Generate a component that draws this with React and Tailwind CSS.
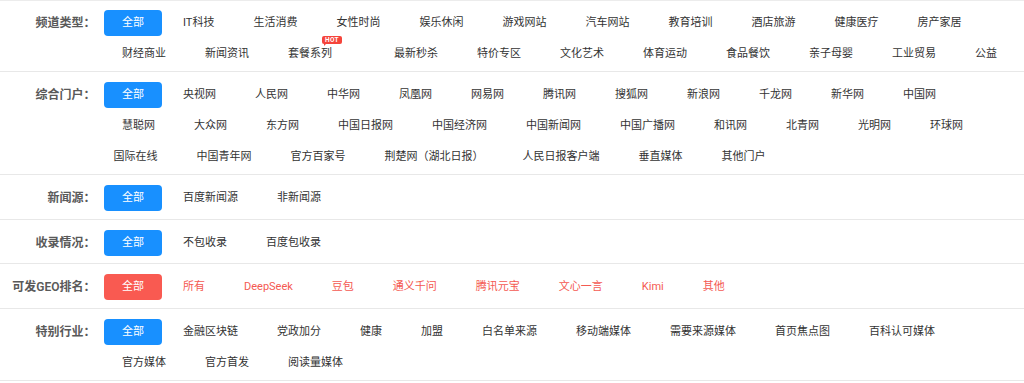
const groups = [
  {
    label: '频道类型：',
    multi: true,
    items: ['全部', 'IT科技', '生活消费', '女性时尚', '娱乐休闲', '游戏网站', '汽车网站', '教育培训', '酒店旅游', '健康医疗', '房产家居', '财经商业', '新闻资讯', '套餐系列', '最新秒杀', '特价专区', '文化艺术', '体育运动', '食品餐饮', '亲子母婴', '工业贸易', '公益'],
  },
  {
    label: '综合门户：',
    multi: true,
    items: ['全部', '央视网', '人民网', '中华网', '凤凰网', '网易网', '腾讯网', '搜狐网', '新浪网', '千龙网', '新华网', '中国网', '慧聪网', '大众网', '东方网', '中国日报网', '中国经济网', '中国新闻网', '中国广播网', '和讯网', '北青网', '光明网', '环球网', '国际在线', '中国青年网', '官方百家号', '荆楚网（湖北日报）', '人民日报客户端', '垂直媒体', '其他门户'],
  },
  { label: '新闻源：', items: ['全部', '百度新闻源', '非新闻源'] },
  { label: '收录情况：', items: ['全部', '不包收录', '百度包收录'] },
  { label: '可发GEO排名：', red: true, items: ['全部', '所有', 'DeepSeek', '豆包', '通义千问', '腾讯元宝', '文心一言', 'Kimi', '其他'] },
  {
    label: '特别行业：',
    multi: true,
    items: ['全部', '金融区块链', '党政加分', '健康', '加盟', '白名单来源', '移动端媒体', '需要来源媒体', '首页焦点图', '百科认可媒体', '官方媒体', '官方首发', '阅读量媒体'],
  },
];

const Item = ({ text, active, red }) => {
  let cls = 'text-[#333]';
  if (active) cls = red ? 'bg-[#f95a51] text-white' : 'bg-[#1890ff] text-white';
  else if (red) cls = 'text-[#f45a52]';

  const hot = text === '套餐系列';
  const shift = text === '国际在线';

  return (
    <span
      className={`relative mx-[1.5px] h-[26px] leading-[26px] rounded-[4px] whitespace-nowrap text-[11px] pl-[18px] ${hot ? 'pr-[41px]' : 'pr-[18px]'} ${shift ? '-ml-[7px]' : ''} ${cls}`}
    >
      {text}
      {hot && (
        <span className="absolute left-[52px] top-[-5px] h-[8px] px-[3px] rounded-[2px] bg-[#f5443b] text-white text-[6.5px] leading-[8px] font-bold tracking-[0.3px]">
          HOT
          <span className="absolute left-[2px] top-[7px] w-0 h-0 border-l-[0px] border-r-[3px] border-t-[3px] border-r-transparent border-t-[#f5443b]"></span>
        </span>
      )}
    </span>
  );
};

export default function App() {
  return (
    <div className="w-[1024px] bg-white border-t border-[#ececec] font-['Roboto','Noto_Sans_CJK_SC',sans-serif]">
      {groups.map((g, i) => (
        <div
          key={g.label}
          className={`flex items-start border-b border-[#e8e8e8] ${i === 0 ? 'pt-[9px]' : 'pt-[10px]'} ${g.multi ? 'pb-[4px]' : 'pb-[7.5px]'}`}
        >
          <div className="w-[102.5px] shrink-0 pr-[7px] text-right text-[12px] leading-[26px] font-semibold text-[#595959] whitespace-nowrap">
            {g.label}
          </div>
          <div className="flex flex-wrap gap-y-[5px] flex-1">
            {g.items.map((t, j) => (
              <Item key={t} text={t} active={j === 0} red={g.red} />
            ))}
          </div>
        </div>
      ))}
    </div>
  );
}
